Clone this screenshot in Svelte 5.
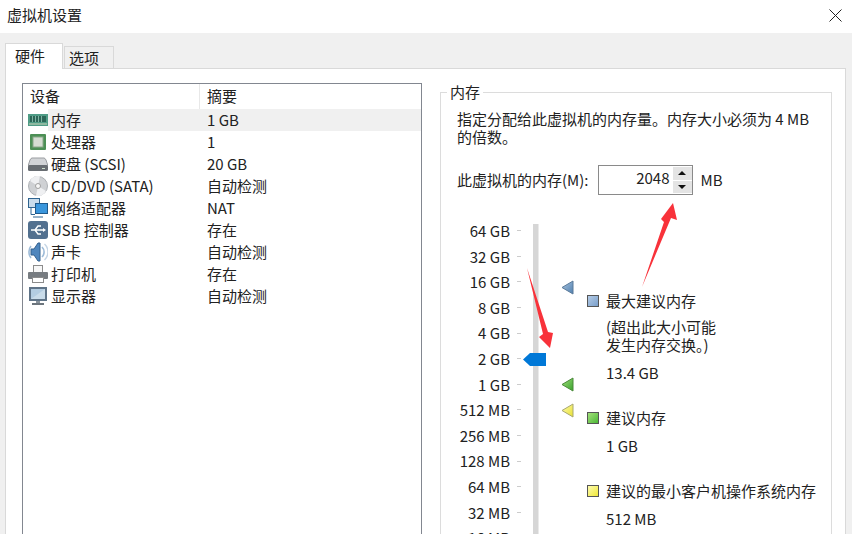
<script lang="ts">
	const devices = [
		{ icon: 'ram', name: '内存', summary: '1 GB' },
		{ icon: 'cpu', name: '处理器', summary: '1' },
		{ icon: 'disk', name: '硬盘 (SCSI)', summary: '20 GB' },
		{ icon: 'cd', name: 'CD/DVD (SATA)', summary: '自动检测' },
		{ icon: 'net', name: '网络适配器', summary: 'NAT' },
		{ icon: 'usb', name: 'USB 控制器', summary: '存在' },
		{ icon: 'sound', name: '声卡', summary: '自动检测' },
		{ icon: 'printer', name: '打印机', summary: '存在' },
		{ icon: 'monitor', name: '显示器', summary: '自动检测' }
	];

	const scale = ['64 GB', '32 GB', '16 GB', '8 GB', '4 GB', '2 GB', '1 GB', '512 MB', '256 MB', '128 MB', '64 MB', '32 MB', '16 MB'];
</script>

<div class="window">
	<header class="titlebar">
		<span>虚拟机设置</span>
		<svg class="close" width="13" height="13" viewBox="0 0 13 13"><path d="M0.5 0.5l12 12M12.5 0.5l-12 12" stroke="#222" fill="none" /></svg>
	</header>

	<div class="body">
		<div class="tabs">
			<div class="tab active">硬件</div>
			<div class="tab">选项</div>
		</div>

		<div class="panel">
			<div class="devices">
				<div class="head">
					<div class="col-a">设备</div>
					<div class="col-b">摘要</div>
				</div>
				{#each devices as d, i}
					<div class="row">
						<svg class="icon" width="20" height="20" viewBox="0 0 20 20">
							{#if d.icon === 'ram'}
								<rect x="0" y="4" width="20" height="12" fill="#4f9c86" />
								<rect x="2" y="6" width="16" height="6" fill="#2c6657" />
								<path d="M4.5 6v6M7.5 6v6M10.5 6v6M13.5 6v6" stroke="#7fb3a3" />
								<rect x="1" y="13" width="18" height="2" fill="#8fb8a0" />
							{:else if d.icon === 'cpu'}
								<rect x="2" y="2" width="16" height="16" rx="1" fill="#4c8f55" />
								<rect x="5" y="5" width="10" height="10" fill="#d5dcd2" stroke="#8aa88a" />
							{:else if d.icon === 'disk'}
								<path d="M4 4h12q1 0 2 2l2 6H0l2-6q1-2 2-2z" fill="#d2d4d7" stroke="#9a9da1" />
								<rect x="0" y="11" width="20" height="6" rx="1.5" fill="#686d72" />
								<rect x="14" y="14" width="3" height="1" fill="#cfe0cf" />
							{:else if d.icon === 'cd'}
								<circle cx="10" cy="10" r="9.5" fill="#cfd1d4" stroke="#adb0b4" />
								<path d="M10 10L2 5a10 10 0 0 1 10-5zM10 10l8 5a10 10 0 0 1-10 5z" fill="#eff0f2" />
								<circle cx="10" cy="10" r="2.5" fill="#f8f8f8" stroke="#a0a0a0" />
							{:else if d.icon === 'net'}
								<rect x="0.5" y="0.5" width="11" height="9" fill="#c9dcec" stroke="#2f6490" />
								<rect x="7.5" y="5.5" width="12" height="10" fill="#3a96dc" stroke="#1f5a8c" />
								<path d="M3 9.5v7h4M5 19h10" stroke="#2f6490" fill="none" />
							{:else if d.icon === 'usb'}
								<rect x="0" y="1" width="20" height="18" rx="3" fill="#52708f" />
								<path d="M3 10h13M7 10l3-4h3M7 10l3 4h3" stroke="#fff" fill="none" stroke-width="1.4" />
								<path d="M15 8l3 2-3 2z" fill="#fff" />
							{:else if d.icon === 'sound'}
								<path d="M3 7h3l4-6h2v18h-2l-4-6H3z" fill="#4f86bd" stroke="#33608e" />
								<path d="M14 5a7 7 0 0 1 0 10M3 4a9 9 0 0 0-2 6 9 9 0 0 0 2 6" stroke="#9dbbd8" fill="none" stroke-width="1.6" />
								<path d="M16.5 2a11 11 0 0 1 0 16" stroke="#c3d4e4" fill="none" stroke-width="1.4" />
							{:else if d.icon === 'printer'}
								<rect x="5.5" y="1.5" width="9" height="7" fill="#f7f7f7" stroke="#8c8c8c" />
								<rect x="0" y="8" width="20" height="7" rx="1" fill="#777c81" />
								<rect x="4.5" y="13.5" width="11" height="5" fill="#fff" stroke="#8c8c8c" />
							{:else}
								<rect x="1" y="1" width="18" height="14" fill="#5f7488" />
								<rect x="3" y="3" width="14" height="10" fill="#b3cde2" />
								<path d="M3 13L17 3v10z" fill="#c9dcea" />
								<rect x="8" y="15" width="4" height="2" fill="#8a949d" />
								<rect x="4" y="17" width="12" height="2" fill="#6c757d" />
							{/if}
						</svg>
						<div class="name" class:selected={i === 0}>{d.name}</div>
						<div class="summary" class:selected={i === 0}>{d.summary}</div>
					</div>
				{/each}
			</div>

			<section class="group">
				<div class="legend">内存</div>
				<p class="desc">指定分配给此虚拟机的内存量。内存大小必须为 4 MB 的倍数。</p>

				<div class="mem-row">
					<span class="mem-label">此虚拟机的内存(M):</span>
					<div class="spin">
						<div class="value">2048</div>
						<div class="buttons">
							<div class="btn"><i class="up"></i></div>
							<div class="btn"><i class="down"></i></div>
						</div>
					</div>
					<span class="unit">MB</span>
				</div>

				<div class="range">
					<div class="labels">
						{#each scale as s}
							<div class="tick-row"><span>{s}</span><i class="tick"></i></div>
						{/each}
					</div>
					<div class="track"></div>
					<div class="legend-list">
						<div class="entry top">
							<div class="entry-title"><i class="sq blue"></i>最大建议内存</div>
							<div class="note">(超出此大小可能<br />发生内存交换。)</div>
							<div class="size first">13.4 GB</div>
						</div>
						<div class="entry mid">
							<div class="entry-title"><i class="sq green"></i>建议内存</div>
							<div class="size">1 GB</div>
						</div>
						<div class="entry low">
							<div class="entry-title"><i class="sq yellow"></i>建议的最小客户机操作系统内存</div>
							<div class="size">512 MB</div>
						</div>
					</div>
				</div>
			</section>
		</div>
	</div>

	<!-- slider markers and the red annotations lie over the content -->
	<svg class="overlay" width="852" height="534" viewBox="0 0 852 534">
		<defs>
			<linearGradient id="mark-blue" x1="0" y1="0" x2="1" y2="1">
				<stop offset="0" stop-color="#a9c4e0" />
				<stop offset="1" stop-color="#4f7fae" />
			</linearGradient>
			<linearGradient id="mark-green" x1="0" y1="0" x2="1" y2="1">
				<stop offset="0" stop-color="#a4e07c" />
				<stop offset="1" stop-color="#37a02c" />
			</linearGradient>
			<linearGradient id="mark-yellow" x1="0" y1="0" x2="1" y2="1">
				<stop offset="0" stop-color="#fdfbb0" />
				<stop offset="1" stop-color="#e8e030" />
			</linearGradient>
		</defs>
		<path d="M562 287.5L573 281v13z" fill="url(#mark-blue)" stroke="#5b7a9a" />
		<path d="M562 384.5L573 378v13z" fill="url(#mark-green)" stroke="#4a8a3a" />
		<path d="M562 410.5L573 404v13z" fill="url(#mark-yellow)" stroke="#a8a870" />
		<path d="M523 359.5L530 353h16v13h-16z" fill="#0078d7" />
		<path d="M527 268L543 334L539 337L550 348L553 333L548 332z" fill="#f8323a" />
		<path d="M642 287L664 222L661 219L673 203L677 220L671 218z" fill="#f8323a" />
	</svg>
</div>

<style>
	:global(body) {
		margin: 0;
		overflow: hidden;
	}

	.window {
		position: relative;
		width: 852px;
		height: 534px;
		overflow: hidden;
		background: #fff;
		font-family: "Noto Sans CJK SC", sans-serif;
		font-size: 15px;
		color: #222;
	}

	.titlebar {
		height: 33px;
		padding: 0 10px 0 7px;
		display: flex;
		align-items: center;
		justify-content: space-between;
		box-sizing: border-box;
		line-height: 30px;
	}

	.titlebar span {
		margin-top: -3px;
	}

	.close {
		margin-top: -3px;
	}

	.body {
		height: 501px;
		background: #f0f0f0;
		padding: 10px 6px 0 5px;
		box-sizing: border-box;
	}

	.tabs {
		display: flex;
		align-items: flex-end;
		height: 25px;
		position: relative;
		z-index: 1;
	}

	.tab {
		box-sizing: border-box;
		width: 50px;
		height: 22px;
		margin-left: 1px;
		border: 1px solid #d9d9d9;
		border-bottom: none;
		background: #f0f0f0;
		padding-left: 4px;
		line-height: 21px;
	}

	.tab.active {
		width: 58px;
		height: 26px;
		margin: 0 0 -1px 0;
		background: #fff;
		padding-left: 9px;
		line-height: 23px;
	}

	.panel {
		height: 470px;
		background: #fff;
		border: 1px solid #d9d9d9;
		box-sizing: border-box;
		padding: 14px 14px 0 16px;
		display: flex;
		gap: 18px;
		align-items: flex-start;
	}

	.devices {
		box-sizing: border-box;
		width: 400px;
		height: 470px;
		border: 1px solid #828790;
		flex: none;
	}

	.head {
		display: flex;
		height: 25px;
		line-height: 24px;
	}

	.col-a {
		width: 169px;
		padding-left: 7px;
		border-right: 1px solid #e8e8e8;
	}

	.col-b {
		padding-left: 7px;
	}

	.row {
		display: flex;
		height: 22px;
		line-height: 21px;
		align-items: center;
	}

	.icon {
		flex: none;
		margin-left: 5px;
		width: 20px;
		height: 20px;
	}

	.name {
		width: 156px;
		padding-left: 3px;
		flex: none;
		height: 22px;
	}

	.summary {
		flex: 1;
		padding-left: 0;
		height: 22px;
	}

	.selected {
		background: #f0f0f0;
	}

	.group {
		position: relative;
		box-sizing: border-box;
		width: 392px;
		height: 470px;
		margin-top: 9px;
		border: 1px solid #dcdcdc;
		padding: 17px 16px 0;
		flex: none;
	}

	.legend {
		position: absolute;
		top: -11px;
		left: 6px;
		padding: 0 3px;
		background: #fff;
		line-height: 20px;
	}

	.desc {
		margin: 0;
		line-height: 18px;
		width: 360px;
	}

	.mem-row {
		display: flex;
		align-items: center;
		margin-top: 19px;
		height: 30px;
	}

	.mem-label {
		margin-top: -2px;
	}

	.spin {
		box-sizing: border-box;
		width: 95px;
		height: 30px;
		margin-left: 9px;
		border: 1px solid #8a8a8a;
		display: flex;
	}

	.value {
		flex: 1;
		text-align: right;
		padding-right: 3px;
		line-height: 23px;
	}

	.buttons {
		width: 19px;
		display: flex;
		flex-direction: column;
		gap: 1px;
		padding: 1px 0;
		box-sizing: border-box;
	}

	.btn {
		flex: 1;
		background: #e4e4e4;
		display: flex;
		align-items: center;
		justify-content: center;
	}

	.up,
	.down {
		width: 0;
		height: 0;
		border: 4px solid transparent;
	}

	.up {
		border-bottom: 4px solid #111;
		border-top: none;
	}

	.down {
		border-top: 4px solid #111;
		border-bottom: none;
	}

	.unit {
		margin-left: 8px;
		margin-top: -1px;
	}

	.range {
		display: flex;
		margin-top: 29px;
		position: relative;
	}

	.labels {
		width: 66px;
		flex: none;
		margin: -6px 0 0 -2px;
	}

	.tick-row {
		height: 25.6px;
		line-height: 25.6px;
		display: flex;
		justify-content: flex-end;
		align-items: center;
		white-space: nowrap;
	}

	.tick {
		width: 4px;
		height: 1px;
		background: #ccc;
		margin-left: 7px;
	}

	.track {
		width: 5px;
		height: 320px;
		flex: none;
		margin-left: 12px;
		background: #d6d6d6;
		border-right: 1px solid #eaeaea;
		box-sizing: content-box;
	}

	.legend-list {
		margin-left: 48px;
		display: flex;
		flex-direction: column;
	}

	.entry-title {
		display: flex;
		align-items: center;
		line-height: 22px;
		white-space: nowrap;
	}

	.sq {
		box-sizing: border-box;
		width: 12px;
		height: 12px;
		margin-right: 7px;
		border: 1px solid #555;
	}

	.blue {
		background: linear-gradient(135deg, #b4cbe6, #7a9fca);
	}

	.green {
		background: linear-gradient(135deg, #a4e07c, #4cb836);
	}

	.yellow {
		background: linear-gradient(135deg, #fdfbb0, #f0e838);
	}

	.note {
		line-height: 18px;
		margin: 6px 0 0 19px;
	}

	.size {
		margin: 6px 0 0 19px;
		line-height: 22px;
	}

	.size.first {
		margin-top: 8px;
	}

	.top {
		margin-top: 66px;
	}

	.mid {
		margin-top: 23px;
	}

	.low {
		margin-top: 23px;
	}

	.overlay {
		position: absolute;
		inset: 0;
		pointer-events: none;
	}
</style>
